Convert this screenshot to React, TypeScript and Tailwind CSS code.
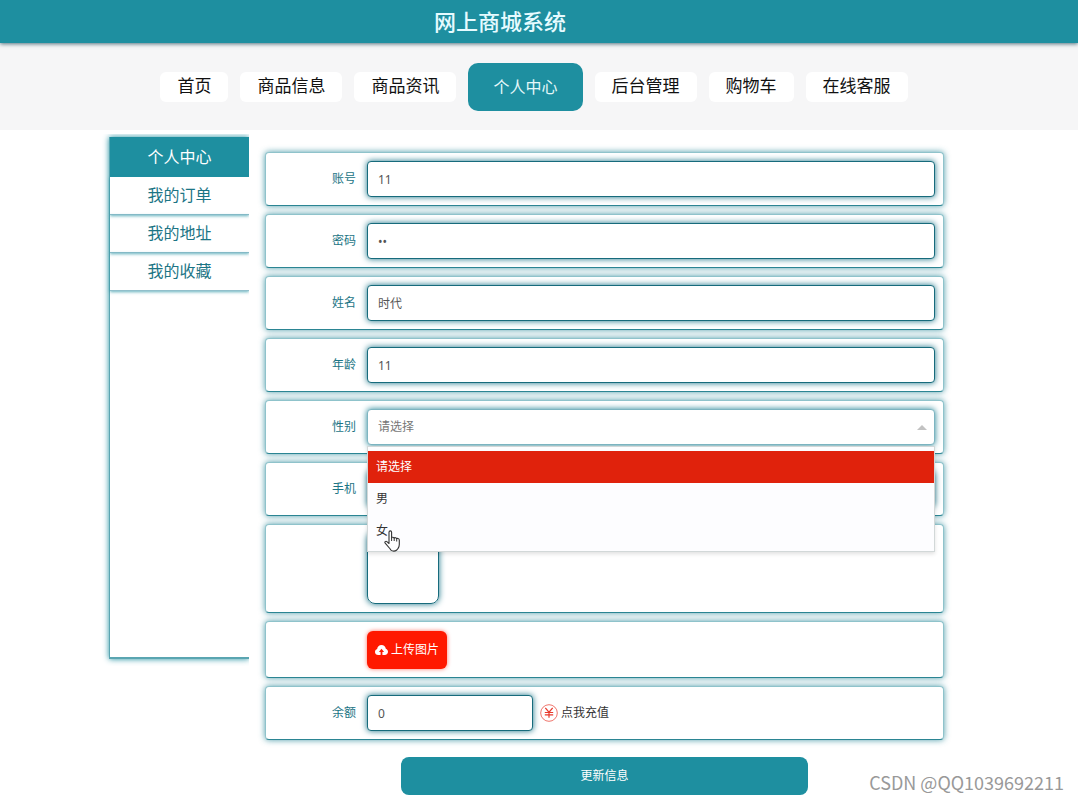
import { useState, type ReactNode } from "react";

const navItems = ["首页", "商品信息", "商品资讯", "个人中心", "后台管理", "购物车", "在线客服"];
const sideItems = ["个人中心", "我的订单", "我的地址", "我的收藏"];
const genders = ["请选择", "男", "女"];

const cardClass =
  "flex rounded border border-[#8fc3cb] border-b-[#2b8593] bg-white px-2 shadow-[0_0_6px_rgba(30,130,148,0.8)]";
const fieldClass =
  "block h-9 rounded border border-[#176b7c] bg-white px-[10px] text-xs text-[#555] shadow-[0_0_6px_rgba(23,115,135,1)] outline-none";

function Row({ id, label, children }: { id?: string; label?: string; children: ReactNode }) {
  return (
    <div className={`${cardClass} h-[54px] items-center`}>
      <label htmlFor={id} className="w-[82px] shrink-0 text-right text-xs text-[#1c7585]">
        {label}
      </label>
      <div className="relative ml-[11px] min-w-0 flex-1">{children}</div>
    </div>
  );
}

function TextRow({ id, label, value, type = "text" }: { id: string; label: string; value: string; type?: string }) {
  return (
    <Row id={id} label={label}>
      <input id={id} type={type} defaultValue={value} className={`${fieldClass} w-full`} />
    </Row>
  );
}

function UploadIcon() {
  return (
    <svg viewBox="0 0 26 20" className="h-[10px] w-[13px]" aria-hidden="true">
      <path
        fill="currentColor"
        fillRule="evenodd"
        d="M6.5 20C2.8 20 0 17.3 0 13.8 0 10.8 1.8 8.6 4.3 7.8 4.6 3.5 8.2 0 13 0c4.5 0 8 3 8.7 7.3C24.3 8.2 26 10.6 26 13.6 26 17.2 23.2 20 19.5 20h-4.7v-6h3.4L13 7.6 7.8 14h3.4v6z"
      />
    </svg>
  );
}

function YuanIcon() {
  return (
    <svg viewBox="0 0 18 18" className="size-[18px]" fill="none" stroke="#e8392c" aria-hidden="true">
      <circle cx="9" cy="9" r="8.3" strokeWidth="0.7" />
      <path d="M5.3 3.8 9 8.2l3.7-4.4M9 8.2v5.5M4.8 8.5h8.4M4.8 10.8h8.4" strokeWidth="1.2" />
    </svg>
  );
}

function HandCursor() {
  return (
    <svg viewBox="0 0 17 22" className="absolute top-[83px] left-4 h-[22px] w-[17px]" aria-hidden="true">
      <path
        d="M5 13.5V2.3C5 .4 7.6.4 7.6 2.3V8c0-1.2 2.6-1.1 2.6.4 0-1.1 2.5-1 2.5.6 0-1.1 2.6-.8 2.6 1v4.6c0 1.6-.5 2.7-1.2 3.8L12.8 20C11 21.3 8.6 21.3 7 20.1L5.8 18.5 1.2 13.2c-1-1.3.6-2.5 1.700-1.500z"
        fill="#fff"
        stroke="#333"
        strokeWidth="1.1"
        strokeLinejoin="round"
      />
      <path d="M7.6 8v3M10.2 8.5V11M12.7 9.2V11.5" stroke="#333" strokeWidth="1" fill="none" />
    </svg>
  );
}

export default function App() {
  const [gender, setGender] = useState("请选择");

  return (
    <div className="relative min-h-screen bg-white font-['Noto_Sans','Noto_Sans_CJK_SC',sans-serif]">
      <header className="relative flex h-[43px] items-center justify-center bg-[#1e8fa0] pr-[78px] pb-[2px] shadow-[0_1px_4px_rgba(40,80,95,0.8)]">
        <h1 className="text-[22px] leading-none font-medium text-[#e6fbff]">网上商城系统</h1>
      </header>

      <nav className="flex h-[87px] items-center justify-center gap-3 bg-[#f6f6f7] pr-[10px]">
        {navItems.map((item) =>
          item === "个人中心" ? (
            <a key={item} href="#" className="flex h-12 items-center rounded-[10px] bg-[#1e8fa0] px-[25px] text-base text-[#e5f8fa]">
              {item}
            </a>
          ) : (
            <a key={item} href="#" className="flex h-[30px] items-center rounded-md bg-white px-[17px] pb-[2px] text-[17px] text-[#111]">
              {item}
            </a>
          ),
        )}
      </nav>

      <div className="flex pr-[134px] pl-[109px]">
        <div className="mt-[4px] mr-2 -ml-2 h-[532px] w-[148px] shrink-0 overflow-hidden pt-[3px] pl-2">
          <aside className="h-[522px] border-b-2 border-l border-[#5aa5b1] shadow-[0_0_6px_rgba(30,143,160,1)]">
            <ul className="text-center text-base">
              {sideItems.map((item, i) => (
                <li key={item}>
                  <a
                    href="#"
                    className={
                      i === 0
                        ? "flex h-10 items-center justify-center bg-[#1e8fa0] text-white"
                        : "flex h-[38px] items-center justify-center border-b border-[#91bfcb] pb-[2px] text-[#1c7585] shadow-[0_1px_3px_rgba(30,143,160,0.7)]"
                    }
                  >
                    {item}
                  </a>
                </li>
              ))}
            </ul>
          </aside>
        </div>

        <form className="mt-[22px] ml-2 min-w-0 flex-1" onSubmit={(e) => e.preventDefault()}>
          <div className="flex flex-col gap-2">
            <TextRow id="account" label="账号" value="11" />
            <TextRow id="password" label="密码" value="11" type="password" />
            <TextRow id="name" label="姓名" value="时代" />
            <TextRow id="age" label="年龄" value="11" />

            <Row id="gender" label="性别">
              <select
                id="gender"
                value={gender}
                onChange={(e) => setGender(e.target.value)}
                className="block h-9 w-full appearance-none rounded border border-[#7db5c1] bg-white px-[10px] text-xs text-[#777] shadow-[0_0_6px_rgba(30,130,148,1)] outline-none"
              >
                {genders.map((g) => (
                  <option key={g}>{g}</option>
                ))}
              </select>
              <svg viewBox="0 0 10 5" className="absolute top-4 right-2 h-[5px] w-[10px]" aria-hidden="true">
                <path d="M0 5 5 0l5 5z" fill="#c2c2c2" />
              </svg>
              <div className="absolute inset-x-0 top-[37px] z-10 border border-[#d2d8d8] bg-[#fdfdff] py-1 shadow-[0_2px_4px_rgba(0,0,0,0.12)]">
                <ul role="listbox" aria-label="性别">
                  {genders.map((g) => (
                    <li
                      key={g}
                      role="option"
                      aria-selected={g === gender}
                      onClick={() => setGender(g)}
                      className={
                        g === gender
                          ? "flex h-8 items-center bg-[#e0220c] px-2 text-xs text-white"
                          : "flex h-8 items-center px-2 text-xs text-[#333]"
                      }
                    >
                      {g}
                    </li>
                  ))}
                </ul>
                <HandCursor />
              </div>
            </Row>

            <TextRow id="phone" label="手机" value="" type="tel" />

            <div className={`${cardClass} h-[89px] pl-[101px]`}>
              <div className="mt-[7px] size-[72px] rounded-lg border border-[#176b7c] shadow-[0_0_6px_rgba(23,115,135,1)]" />
            </div>

            <div className={`${cardClass} h-[57px] items-center pl-[101px]`}>
              <button
                type="button"
                className="flex h-[38px] items-center gap-[3px] rounded-md bg-[#ff1900] px-2 text-xs text-white shadow-[0_0_4px_rgba(255,25,0,0.6)]"
              >
                <UploadIcon />
                上传图片
              </button>
            </div>

            <Row id="balance" label="余额">
              <div className="flex items-center">
                <input id="balance" defaultValue="0" className={`${fieldClass} w-[166px]`} />
                <a href="#" className="ml-[7px] flex items-center gap-[3px] text-xs text-[#333]">
                  <YuanIcon />
                  点我充值
                </a>
              </div>
            </Row>
          </div>

          <button type="submit" className="mx-auto mt-[17px] block h-[38px] w-3/5 rounded-lg bg-[#1e8fa0] text-xs text-white">
            更新信息
          </button>
        </form>
      </div>

      <p className="absolute right-[14px] bottom-[7px] font-['Noto_Sans_CJK_SC',sans-serif] text-lg leading-6 text-[#999]">
        CSDN @QQ1039692211
      </p>
    </div>
  );
}
